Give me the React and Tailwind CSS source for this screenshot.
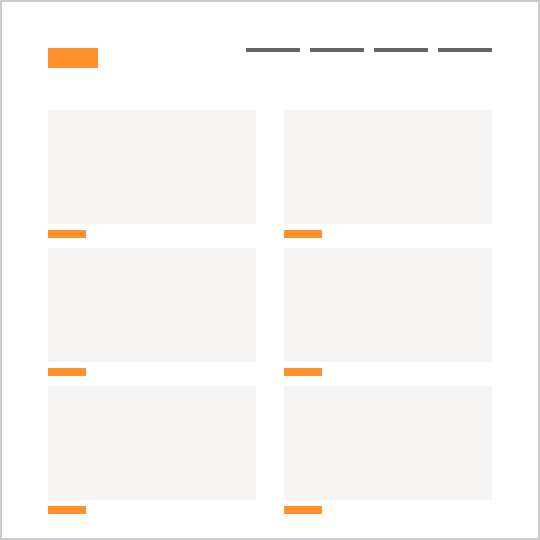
export default function App() {
  const cards = [0, 1, 2, 3, 4, 5];
  return (
    <div className="w-[540px] h-[540px] bg-white border-2 border-[#cccccc] px-[46px] pt-[46px]">
      <div className="flex items-start justify-between">
        <div className="w-[50px] h-[20px] bg-[#ff922b]" />
        <div className="flex gap-[10px]">
          <div className="w-[54px] h-[4px] bg-[#666666]" />
          <div className="w-[54px] h-[4px] bg-[#666666]" />
          <div className="w-[54px] h-[4px] bg-[#666666]" />
          <div className="w-[54px] h-[4px] bg-[#666666]" />
        </div>
      </div>
      <div className="grid grid-cols-2 gap-x-[28px] gap-y-[10px] mt-[42px]">
        {cards.map((c) => (
          <div key={c}>
            <div className="h-[114px] bg-[#f5f4f2]" />
            <div className="mt-[6px] w-[38px] h-[8px] bg-[#ff922b]" />
          </div>
        ))}
      </div>
    </div>
  );
}
